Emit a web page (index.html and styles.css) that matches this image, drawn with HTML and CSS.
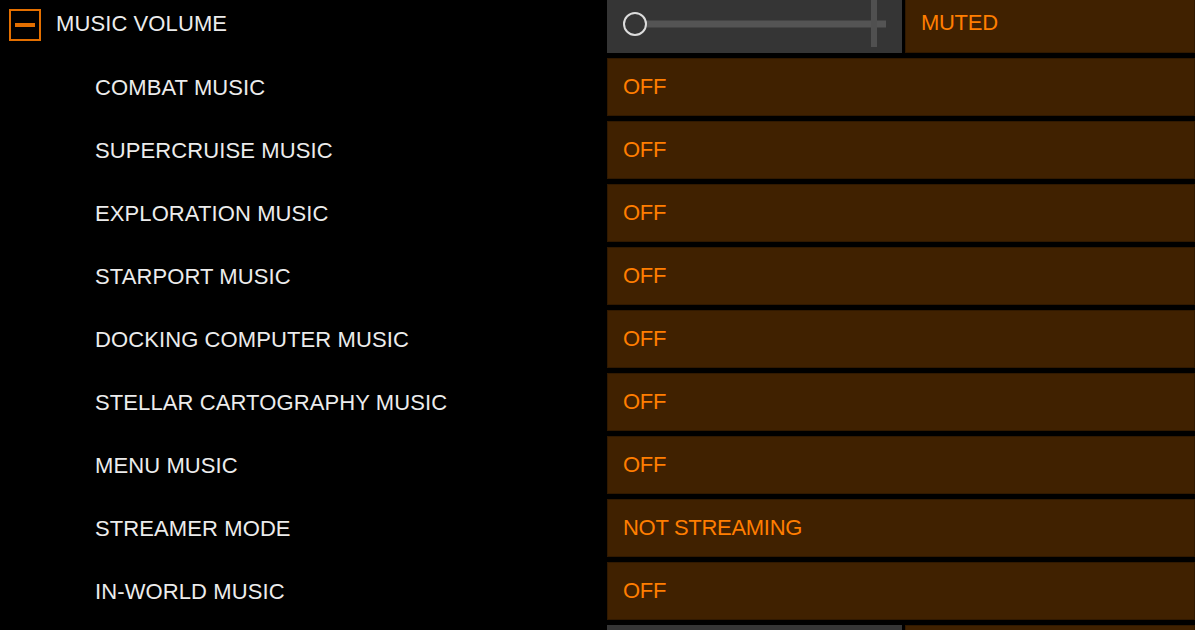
FILE: index.html
```html
<!DOCTYPE html>
<html>
<head>
<meta charset="utf-8">
<link rel="stylesheet" href="styles.css">
</head>
<body>
<div class="list">
  <div class="row">
    <div class="label head">
      <svg class="minus" width="32" height="32" viewBox="0 0 32 32">
        <rect x="1" y="1" width="30" height="30" fill="none" stroke="#e36f00" stroke-width="2"/>
        <rect x="6" y="14" width="20" height="4" fill="#e36f00"/>
      </svg>
      <span>MUSIC VOLUME</span>
    </div>
    <div class="split">
      <div class="slider">
        <svg width="296" height="58" viewBox="0 0 296 58">
          <rect x="27" y="25.5" width="252" height="7" fill="#545454"/>
          <rect x="264" y="5" width="6" height="47" fill="#505050"/>
          <circle cx="28" cy="29" r="11" fill="#353535" stroke="#dcdcdc" stroke-width="2"/>
        </svg>
      </div>
      <div class="value">MUTED</div>
    </div>
  </div>
  <div class="row"><div class="label sub">COMBAT MUSIC</div><div class="value">OFF</div></div>
  <div class="row"><div class="label sub">SUPERCRUISE MUSIC</div><div class="value">OFF</div></div>
  <div class="row"><div class="label sub">EXPLORATION MUSIC</div><div class="value">OFF</div></div>
  <div class="row"><div class="label sub">STARPORT MUSIC</div><div class="value">OFF</div></div>
  <div class="row"><div class="label sub">DOCKING COMPUTER MUSIC</div><div class="value">OFF</div></div>
  <div class="row"><div class="label sub">STELLAR CARTOGRAPHY MUSIC</div><div class="value">OFF</div></div>
  <div class="row"><div class="label sub">MENU MUSIC</div><div class="value">OFF</div></div>
  <div class="row"><div class="label sub">STREAMER MODE</div><div class="value">NOT STREAMING</div></div>
  <div class="row"><div class="label sub">IN-WORLD MUSIC</div><div class="value">OFF</div></div>
  <div class="row">
    <div class="label sub"></div>
    <div class="split">
      <div class="slider"></div>
      <div class="value"></div>
    </div>
  </div>
</div>
</body>
</html>
```
FILE: styles.css
```css
html, body {
  margin: 0;
  padding: 0;
  background: #000;
  width: 1195px;
  height: 630px;
  overflow: hidden;
}
.list {
  display: flex;
  flex-direction: column;
  gap: 5px;
  margin-top: -5px;
  font-family: "Liberation Sans", Arial, sans-serif;
}
.row {
  display: grid;
  grid-template-columns: 607px 1fr;
  height: 58px;
}
.label {
  display: flex;
  align-items: center;
  color: #ececec;
  font-size: 22px;
  letter-spacing: 0.1px;
  padding-top: 1px;
}
.label.head {
  padding-left: 9px;
  gap: 15px;
  padding-top: 0;
}
.label.head span {
  margin-top: 0;
}
.minus {
  display: block;
  margin-top: 2px;
}
.label.sub {
  padding-left: 95px;
}
.split {
  display: grid;
  grid-template-columns: 295px 1fr;
  gap: 3px;
}
.slider {
  background: #353535;
}
.slider svg {
  display: block;
}
.value {
  background: #402100;
  box-shadow: inset 0 0 0 1px #311900;
  color: #ff7e00;
  font-size: 22px;
  letter-spacing: -0.3px;
  display: flex;
  align-items: center;
  padding-left: 16px;
}
.split .value {
  padding-left: 16px;
  padding-bottom: 2px;
}
```
